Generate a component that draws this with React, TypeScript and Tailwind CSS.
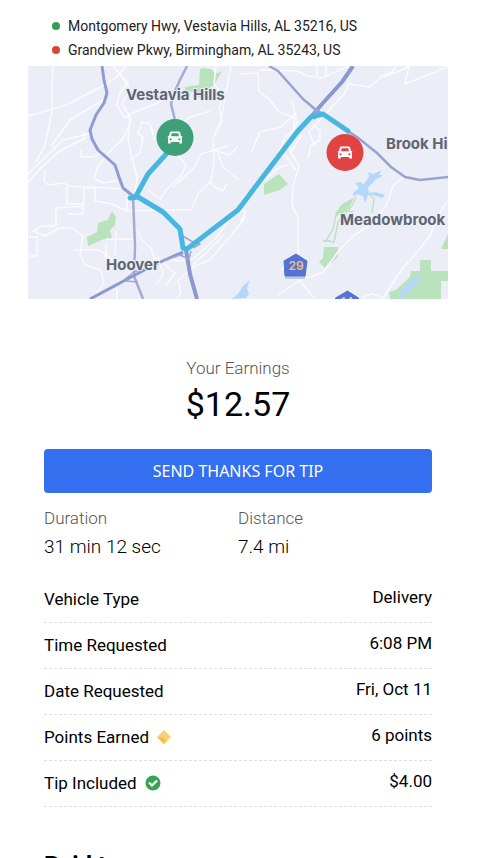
import React from "react";

const route = "#48b7e0";
const font = "font-['Roboto','Noto_Sans',sans-serif]";

function CarPin({ x, y, color }: { x: number; y: number; color: string }) {
  return (
    <g transform={`translate(${x} ${y})`}>
      <circle r="18.5" fill={color} />
      <path
        fill="#fff"
        fillRule="evenodd"
        d="M-3.8-6h7.6c.7 0 1.1.3 1.3 1L6-1.600h1.200V0H6.400c.4.4.6.9.6 1.500V6H4.300V4.500H-4.300V6H-7V1.500C-7 .9-6.800.4-6.400 0h-.8v-1.600H-6L-5.100-5c.2-.7.6-1 1.300-1zM-3.300-4.200-4-1.200h8l-.7-3zM-4.400.7a1.100 1.100 0 1 0 0 2.200a1.100 1.100 0 1 0 0-2.200zM4.400.7a1.100 1.100 0 1 0 0 2.200a1.100 1.100 0 1 0 0-2.200z"
      />
    </g>
  );
}

function TripMap() {
  return (
    <svg
      viewBox="28 66 420 233"
      className="block w-full"
      role="img"
      aria-label="Trip route map"
    >
      <rect x="28" y="66" width="420" height="233" fill="#ebeef6" />

      <g fill="#b9e2bd">
        <path d="M200 70l2-2 9 1 4 5 7-3-8 14-8 5-4 7h-4l-1-5-12-1v-4l14-2z" />
        <path d="M112 211l4 6-1 8-5 5 2 8-3 2-5-1-16 7-1-9 10-5 1-9 10-3z" />
        <path d="M264 184l15-10 9 10-8 6-16 5z" />
        <path d="M324 247l14 0 0 10-13 11-6-6 4-4z" />
        <path d="M448 234l0 15-7 0z" />
        <path d="M420 260l11 0 0 11 17 0 0 10-7 0 0 18-51 0-1-7 7-2 14-13 1-6 9 0z" />
        <path d="M342 204l12-6-5 10-7 6-7 0z" />
      </g>
      <path
        d="M353 199l-10 6-7 10-3 14-7 12 8 1 4-20 14-16 4-9M323 241l8 0M372 213l2-14-6-6M336 216l7-6 10 2"
        fill="none"
        stroke="#b9e2bd"
        strokeWidth="1.300"
      />
      <g fill="#b3d8fb">
        <path d="M382 170l-3 5 4 0-4 3-3 1-8 9 1 5 6-1 10 3-3 3-9-3-5 0-3 8-2-7-6-2-3 3-1-4 6-5-4-5 6-1 2 3 6-8-1-5 5 2z" />
        <path d="M422 275l-5 9-9 8-6 7h-3l3-10 9-9z" />
        <path d="M250 280l-3 8 2 6-3 4-14 1 6-5 5-8z" />
      </g>

      <g fill="none" stroke="#fafbfe" strokeWidth="1.500" strokeLinejoin="round">
        <path d="M53 66l-1 22 0 24-7 33-9 17M28 116l38-11 33-17 17-10 10-12M56 150l-4-5 18-25 33-20M113 66l15 17-8 9-3 13 8 13 7-5 30-12M129 113l1 11-8 16-13 12-11 15-4 11 9 5 14-2M28 182l12-13 18-17 27-14-1-6M28 174l35-34 26-6M81 150l0 7 12 0 12-6" />
        <path d="M45 171l-1 10 4 4 16-2 5 3 57 3M67 186l0 18 17 0 0-16 11 0 0 13 17 3 15 7 0-16M56 208l27-2 0 8-15 0M56 208l0 18 -14 0-9 5 12 5 14-8 14 0 10 8-3 19 5 10 16 5 3 13-8 10M29 237l8 0 0 19-8 0" />
        <path d="M113 66l12 15 5 9-8 14 8 13-2 22 3 15 6 23-2 17M130 160l10-7 3-16-5-3 4-12 8 2 5 16M148 190l12 9 6-9 16-15 4-11-14-15-6-13M173 187l20-18 8-15 27-8M126 211l37-1 28 0 8-18 11-10 6 6 7 3 4-8M216 66l-2 18 11 13-4 24-8 18 1 24-3 18M165 151l5-15 18-18 22-7M213 150l17 5 8-9M218 153l5 14 16 13M231 66l-4 22-8 19 3 15-7 11" />
        <path d="M138 230l4 10 9 8 5 16 11-6 11 3 15-2 23-21 16-22 13-6-2 11-17 20-16 19-17 7-15 13 3 14-14 13M116 231l-1 24M106 239l28 0 0 24-28 0 0-18M75 250l24 0 18 13M117 288l0 11M158 256l5 18-6 10M163 263l12 10-10 13M192 265l12-10 20-20" />
        <path d="M240 74l18-1 1 18 11 9 8 11 16 7 0 17-10 13-10 15-15 20-17 16M261 70l36 1 11 5 14 2 29-13M317 66l0 10M326 66l0 10M296 113l-15 14-21 5-9 21M292 100l5 23-8 17 2 13 8 13-6 21-1 17 6 15 0 36-17 15M288 165l-10 3-17 15-10 11M302 135l-11 17M349 82l-4 11-25 27-11 12 6 14M348 84l22 3 11-10 11-5 6-8M384 77l20-8 5-3-4 18 13-5 31-13M240 221l5-4-5 8" />
        <path d="M448 201l-10 14-8 21-12 15-17 19-17 27M404 177l-11 9-6 18-15 20-19 12-15 16-15 20-12 5-9 2-24 16M297 277l18 22M363 297l9-3 12 4M312 125l8 5 0 10-9 5-3 13M293 131l-8 6-8 20M274 157l11-2 11 15" />
      </g>

      <g fill="none" strokeLinejoin="round">
        <path d="M187 66l-7 14-6 13-3 11 4 16M133 196l2 50-1 30 9 23" stroke="#a5abd4" strokeWidth="2.500" />
        <path d="M102 66l2 14 3 13-3 10-8 12-6 15 2 9 6 11 17 15 4 12 4 11 10 8" stroke="#8f9cd4" strokeWidth="3" />
        <path d="M90 299l43-23 25-13 25-11" stroke="#8b97d0" strokeWidth="3" />
        <path d="M186 250l4 24 7 25" stroke="#8b97d0" strokeWidth="4" />
        <path d="M125 279l9-7 9-3M183 236l8 5 9 3-7 4M180 255l9 4 2-8M126 281l12 1M183 254l-20 7" stroke="#9ea7d3" strokeWidth="1.500" />
        <path d="M269 66l9 5 25 28 13 11 27 18 14 9 20 16 14 14 14 10 15 3 28-3" stroke="#9ba2cf" strokeWidth="2.500" />
        <path d="M353 66l-11 16-20 22-12 14" stroke="#8b98d0" strokeWidth="4" />
        <path d="M312 113l5-6 5 6-8 7z" fill="#98a3d3" />
        <path d="M168 152l-20 22-12 22-6 2 8-1 25 15 17 17 3 19 4 1 51-39 18-24 41-54 14-15 12-3 25 17" stroke={route} strokeWidth="5" strokeLinecap="round" />
      </g>

      <CarPin x={175} y={137.500} color="#3f9f78" />
      <CarPin x={345} y={152.500} color="#e14242" />

      <g
        fill="#606571"
        stroke="#ebeef6"
        strokeWidth="2"
        paintOrder="stroke"
        fontSize="15"
        fontWeight="700"
        className="font-['Inter',sans-serif]"
      >
        <text x="126" y="100">Vestavia Hills</text>
        <text x="386" y="149">Brook Hills</text>
        <text x="340" y="225">Meadowbrook</text>
        <text x="106" y="270">Hoover</text>
      </g>

      <path d="M296 257l11 7-2 15h-20l-1-15z" fill="#c3c8da" />
      <path d="M296 254l11 7-2 15h-20l-1-15z" fill="#5673d3" stroke="#5673d3" strokeLinejoin="round" />
      <path d="M347.500 291l11 7-2 15h-20l-1-15z" fill="#5673d3" stroke="#5673d3" strokeLinejoin="round" />
      <g
        fill="#e3c578"
        fontSize="12"
        fontWeight="600"
        textAnchor="middle"
        className="font-['Inter',sans-serif]"
      >
        <text x="296" y="270">29</text>
        <text x="347" y="306">14</text>
      </g>
    </svg>
  );
}

function Diamond() {
  return (
    <svg viewBox="0 0 14 14" className="size-3.5" aria-hidden="true">
      <path d="M7 0l7 7-7 7-7-7z" fill="#f8d07a" />
      <path d="M0 7l7 1v6z" fill="#f2bd45" />
      <path d="M7 8v6l3.500-3.500z" fill="#f5c654" />
    </svg>
  );
}

function Check() {
  return (
    <svg viewBox="0 0 16 16" className="size-4" aria-hidden="true">
      <circle cx="8" cy="8" r="7.500" fill="#38a255" />
      <path d="M4 7.500l3 3 5-5" fill="none" stroke="#fff" strokeWidth="2.200" />
    </svg>
  );
}

const stops = [
  { dot: "bg-[#32a05a]", text: "Montgomery Hwy, Vestavia Hills, AL 35216, US" },
  { dot: "bg-[#db4437]", text: "Grandview Pkwy, Birmingham, AL 35243, US" },
];

const totals = [
  { label: "Duration", value: "31 min 12 sec" },
  { label: "Distance", value: "7.4 mi" },
];

const details: { label: string; value: string; icon?: React.ReactNode }[] = [
  { label: "Vehicle Type", value: "Delivery" },
  { label: "Time Requested", value: "6:08 PM" },
  { label: "Date Requested", value: "Fri, Oct 11" },
  { label: "Points Earned", value: "6 points", icon: <Diamond /> },
  { label: "Tip Included", value: "$4.00", icon: <Check /> },
];

export default function App() {
  return (
    <main className={`h-screen overflow-hidden bg-white pt-3.5 pr-8 pl-7 text-black ${font}`}>
      <ul className="mb-1 px-6">
        {stops.map((s) => (
          <li key={s.text} className="flex items-center gap-2 text-sm leading-6 text-[#222]">
            <span className={`size-2 shrink-0 rounded-full ${s.dot}`} />
            <span className="whitespace-nowrap">{s.text}</span>
          </li>
        ))}
      </ul>
      <TripMap />

      <div className="px-4">
        <section className="mt-[57px] text-center">
          <h2 className="text-[17px] leading-6 font-light text-[#555]">Your Earnings</h2>
          <p className="text-[34px] leading-[48px]">$12.57</p>
        </section>

        <button
          type="button"
          className="mt-[21px] h-11 w-full rounded bg-[#346ff0] font-['Noto_Sans',sans-serif] text-base text-white"
        >
          SEND THANKS FOR TIP
        </button>

        <dl className="mt-[13px] grid grid-cols-2">
          {totals.map((t) => (
            <div key={t.label}>
              <dt className="text-[17px] leading-6 font-light text-[#555]">{t.label}</dt>
              <dd className="mt-[3px] text-[19px] leading-7 font-light">{t.value}</dd>
            </div>
          ))}
        </dl>

        <dl className="mt-4">
          {details.map((d) => (
            <div
              key={d.label}
              className="flex items-start justify-between border-b border-dashed border-[#e0e0e0] pt-2.5 pb-[11px] text-[17px]"
            >
              <dt className="flex items-center gap-2 leading-6">
                {d.label}
                {d.icon}
              </dt>
              <dd className="leading-5">{d.value}</dd>
            </div>
          ))}
        </dl>

        <h2 className="mt-[42px] text-2xl leading-8 font-bold">Paid to you</h2>
      </div>
    </main>
  );
}
